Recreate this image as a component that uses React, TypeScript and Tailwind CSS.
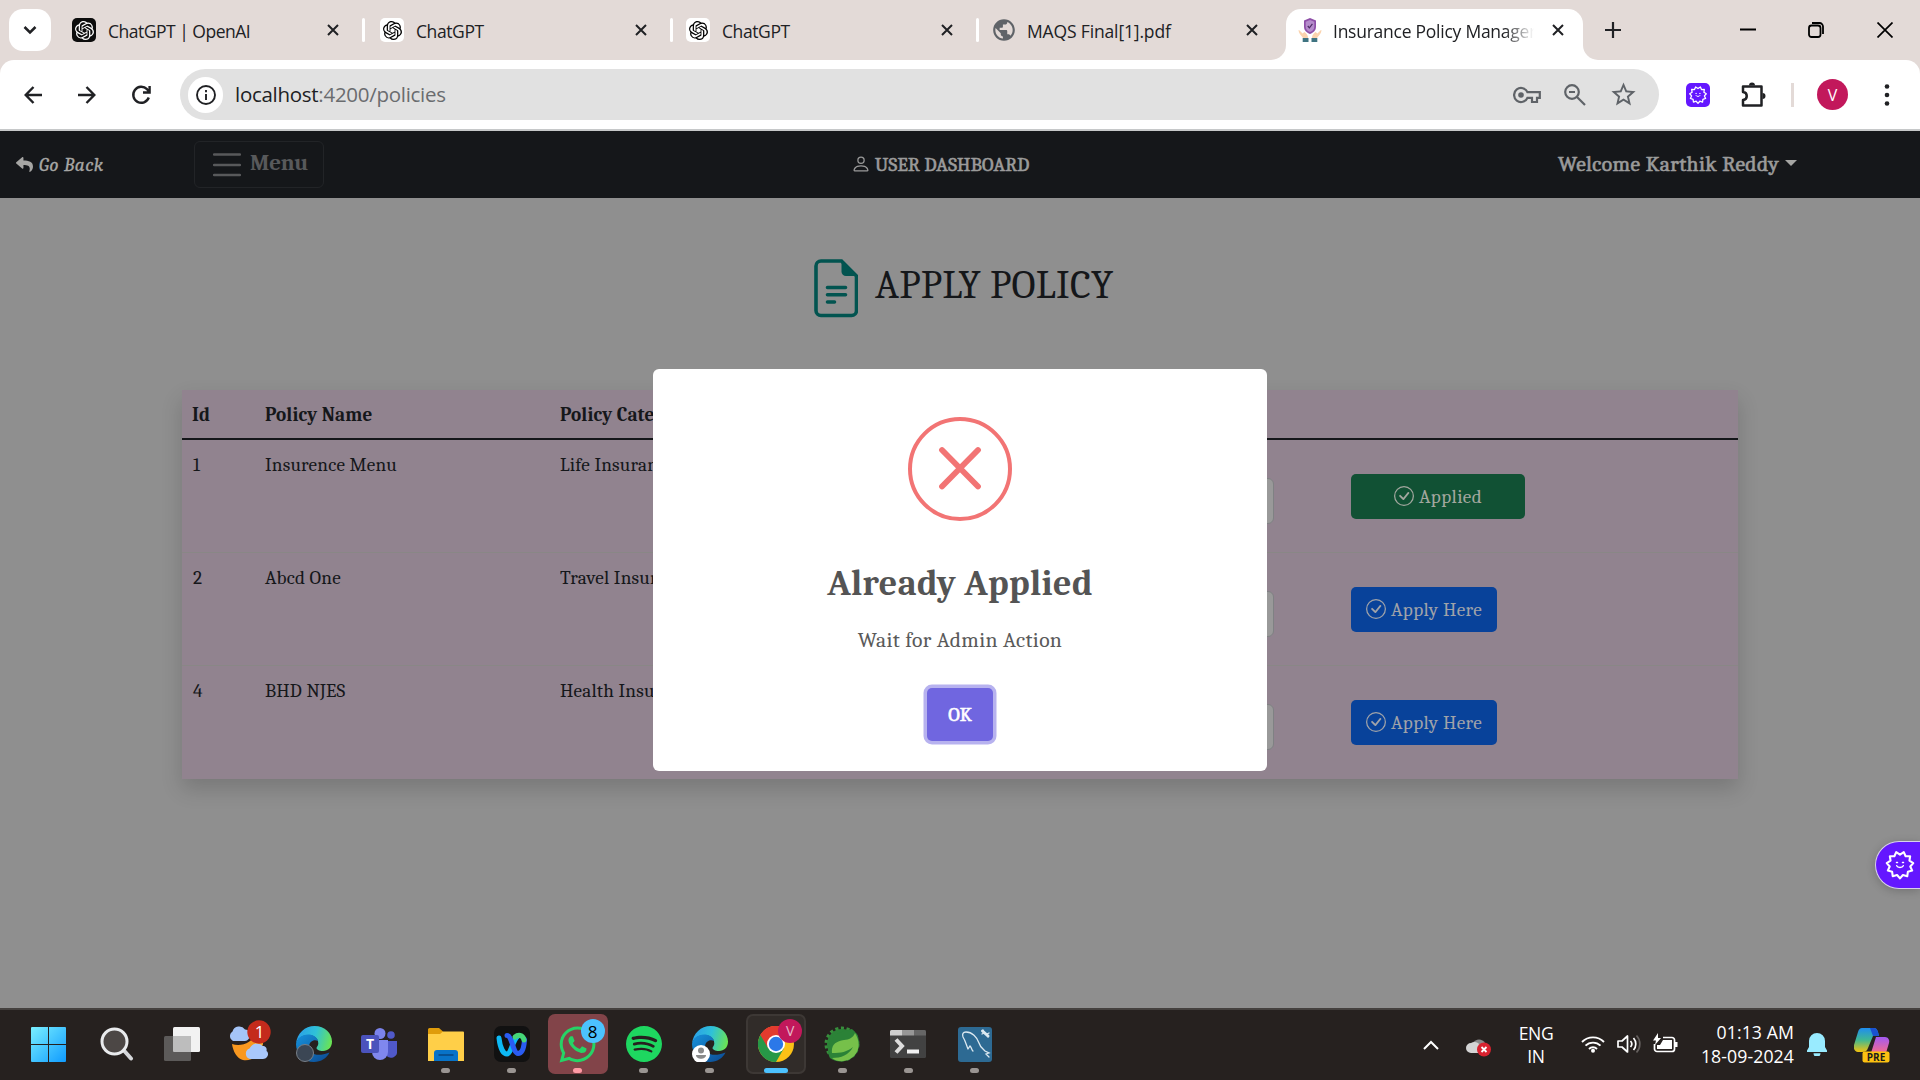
import React from "react";
import { SiOpenai, SiSpotify } from "react-icons/si";
import { FaReply, FaWhatsapp } from "react-icons/fa";
import { BsPerson, BsCheckCircle } from "react-icons/bs";
import { MdPublic, MdStarBorder } from "react-icons/md";

const serif = "font-[Caladea,Cambria,'Liberation_Serif',serif]";
const sans = "font-['Segoe_UI','Open_Sans',sans-serif]";

function CloseX({ className = "" }: { className?: string }) {
  return (
    <svg viewBox="0 0 12 12" className={`h-3 w-3 shrink-0 ${className}`} stroke="#202124" strokeWidth="2" fill="none">
      <path d="M1 1l10 10M11 1L1 11" />
    </svg>
  );
}

function Tab({ icon, title, textClass, iconClass }: { icon: React.ReactNode; title: string; textClass: string; iconClass?: string }) {
  return (
    <div className="flex h-full items-center">
      <div className={`flex h-6 w-6 shrink-0 items-center justify-center rounded-[5px] ${iconClass}`}>{icon}</div>
      <span className={`ml-3 w-[212px] shrink-0 whitespace-nowrap pt-[3px] text-[17.5px] text-[#202124] ${textClass}`}>{title}</span>
      <CloseX className="ml-[7px]" />
      <span className="ml-[23px] h-6 w-[3px] shrink-0 rounded bg-white" />
    </div>
  );
}

function GearFace({ className }: { className: string }) {
  const pts = Array.from({ length: 11 }, (_, i) => {
    const a = (i * 2 * Math.PI) / 11 - Math.PI / 2 + Math.PI / 11;
    const b = a + Math.PI / 11;
    return `${(16 + 13.4 * Math.cos(a)).toFixed(2)},${(16 + 13.4 * Math.sin(a)).toFixed(2)} ${(16 + 10.4 * Math.cos(b)).toFixed(2)},${(16 + 10.4 * Math.sin(b)).toFixed(2)}`;
  }).join(" ");
  return (
    <svg viewBox="0 0 32 32" className={className} fill="none" stroke="white" strokeLinejoin="round" strokeLinecap="round">
      <polygon points={pts} strokeWidth="2.1" />
      <path d="M12.7 16.8c1 2.200 5.600 2.200 6.600 0" strokeWidth="1.500" />
      <path d="M12.500 13.500h1M18.500 13.500h1" strokeWidth="1.500" />
    </svg>
  );
}

function ShieldHands() {
  return (
    <svg viewBox="0 0 24 24" className="h-6 w-6 shrink-0">
      <path d="M12 0l6 2.500v6c0 4-2.500 6-6 7.500-3.500-1.500-6-3.500-6-7.500v-6z" fill="#8e4fa8" />
      <path d="M12 2l4.300 1.700v4.800c0 3-1.700 4.500-4.300 5.600-2.600-1.100-4.300-2.600-4.300-5.600V3.700z" fill="#b58ccb" />
      <path d="M9.800 8l1.600 1.800 3-4" stroke="#4a2a63" strokeWidth="1.200" fill="none" />
      <path d="M.5 12c1 0 2.500 2 4 3.500l2-1.500c2 1.500 3.500 3 3.500 6H5C3 17.500.500 15 .500 12zM23.500 12c-1 0-2.500 2-4 3.500l-2-1.500c-2 1.500-3.500 3-3.500 6h5c2-2.500 4.500-5 4.500-8z" fill="#fbd3ae" />
      <path d="M4.700 20h5.800v4H4.700zM13.500 20h5.800v4h-5.800z" fill="#3f7481" />
    </svg>
  );
}

function TabStrip() {
  return (
    <div className={`flex h-[60px] bg-[#e3dad7] ${sans}`}>
      <div className="ml-[9px] mt-[9px] flex h-[42px] w-[42px] items-center justify-center rounded-[14px] bg-white">
        <svg viewBox="0 0 14 10" className="h-[10px] w-[14px]" fill="none" stroke="#202124" strokeWidth="2.500">
          <path d="M1.500 2l5.500 5.500L12.500 2" />
        </svg>
      </div>
      <div className="ml-[21px] flex h-[60px]">
        <div className="w-[308px]">
          <Tab title="ChatGPT | OpenAI" textClass="tracking-[-0.5px]" iconClass="bg-[#0d0d0d]" icon={<SiOpenai className="h-[19px] w-[19px] text-white" />} />
        </div>
        <div className="w-[306px]">
          <Tab title="ChatGPT" textClass="tracking-[-0.4px]" iconClass="bg-white" icon={<SiOpenai className="h-[19px] w-[19px] text-black" />} />
        </div>
        <div className="w-[306px]">
          <Tab title="ChatGPT" textClass="tracking-[-0.4px]" iconClass="bg-white" icon={<SiOpenai className="h-[19px] w-[19px] text-black" />} />
        </div>
        <div className="flex h-full w-[279px] items-center">
          <MdPublic className="ml-[-1px] h-[26px] w-[26px] shrink-0 text-[#5f6368]" />
          <span className="ml-[10px] w-[220px] whitespace-nowrap pt-[3px] text-[17.5px] tracking-[-0.150px] text-[#202124]">MAQS Final[1].pdf</span>
          <CloseX className="ml-[-1px]" />
        </div>
      </div>
      <div className="mt-[9px] flex h-[51px]">
        <div className="flex h-full w-[15px] items-end bg-white">
          <div className="h-full w-full rounded-br-[15px] bg-[#e3dad7]" />
        </div>
        <div className="flex h-full w-[297px] items-center rounded-t-[15px] bg-white pb-[9px] pl-3">
          <ShieldHands />
          <span className="ml-[11px] w-[201px] overflow-hidden whitespace-nowrap pt-[3px] text-[17.500px] tracking-[-0.250px] text-[#202124] [mask-image:linear-gradient(to_right,black_85%,transparent)]">
            Insurance Policy Manager
          </span>
          <CloseX className="ml-[18px]" />
        </div>
        <div className="h-full w-[15px] bg-white">
          <div className="h-full w-full rounded-bl-[15px] bg-[#e3dad7]" />
        </div>
      </div>
      <div className="ml-[7px] flex h-[60px] items-center text-[#202124]">
        <svg viewBox="0 0 16 16" className="h-4 w-4" stroke="currentColor" strokeWidth="2.200">
          <path d="M8 0v16M0 8h16" />
        </svg>
        <svg viewBox="0 0 16 16" className="ml-[119px] h-4 w-4" stroke="black" strokeWidth="2">
          <path d="M0 7.500h16" />
        </svg>
        <svg viewBox="0 0 16 16" className="ml-[52px] h-4 w-4" stroke="black" strokeWidth="1.800" fill="none">
          <rect x="1" y="3.500" width="11.500" height="11.500" rx="2.500" />
          <path d="M4 1h7.500a3.500 3.500 0 013.500 3.500V12" />
        </svg>
        <svg viewBox="0 0 16 16" className="ml-[53px] h-4 w-4" stroke="black" strokeWidth="1.700">
          <path d="M.5.5l15 15M15.500.500l-15 15" />
        </svg>
      </div>
    </div>
  );
}

function Toolbar() {
  const st = { fill: "none", stroke: "#202124", strokeWidth: 2.4 };
  return (
    <div className="bg-[#e3dad7]">
      <div className={`flex h-[71px] items-center rounded-t-[14px] border-b-2 border-[#c6c8c9] bg-white ${sans}`}>
        <svg viewBox="0 0 18 18" className="ml-[24px] h-[18px] w-[18px]" {...st}>
          <path d="M18 9H2M9.500 1L1.700 9l7.800 8" />
        </svg>
        <svg viewBox="0 0 18 18" className="ml-[36px] h-[18px] w-[18px]" {...st}>
          <path d="M0 9h16M8.500 1l7.800 8-7.800 8" />
        </svg>
        <svg viewBox="0 0 20 20" className="ml-[35px] h-5 w-5" {...st}>
          <path d="M17.800 12.500A8 8 0 1116 4.200L18.500 7M18.600 1v6.500H12" />
        </svg>
        <div className="ml-[29px] flex h-[51px] w-[1479px] items-center rounded-full bg-[#e1e1e1] pl-2">
          <div className="flex h-9 w-[35px] items-center justify-center rounded-full bg-white">
            <svg viewBox="0 0 20 20" className="h-5 w-5" fill="none" stroke="#202124" strokeWidth="1.900">
              <circle cx="10" cy="10" r="9" />
              <path d="M10 9v6M10 5v2.200" />
            </svg>
          </div>
          <span className="ml-[12px] whitespace-nowrap pb-px text-[20.500px] tracking-[-0.280px] text-[#6a6c6f]">
            <span className="text-[#202124]">localhost</span>:4200/policies
          </span>
          <div className="ml-auto flex items-center pr-[21px] text-[#5f6368]">
            <svg viewBox="0 0 28 18" className="h-[18px] w-7" fill="none" stroke="currentColor" strokeWidth="2.200">
              <path d="M14.500 6.200A7 7 0 1014.500 11.800H19V16h5v-4.200h2.800V6.200z" />
              <circle cx="8" cy="9" r="2.800" fill="currentColor" stroke="none" />
            </svg>
            <svg viewBox="0 0 22 22" className="ml-[23px] h-[22px] w-[22px]" fill="none" stroke="currentColor" strokeWidth="2.200">
              <circle cx="8" cy="8" r="6.800" />
              <path d="M13 13l8 8M5 8h6" />
            </svg>
            <MdStarBorder className="ml-[23px] h-[29px] w-[29px]" />
          </div>
        </div>
        <div className="ml-[27px] flex h-6 w-6 items-center justify-center rounded-[5px] bg-[#6417ff]">
          <GearFace className="h-5 w-5" />
        </div>
        <svg viewBox="0 0 26 26" className="ml-[31px] h-[26px] w-[26px]" fill="none" stroke="#202124" strokeWidth="2.500">
          <path d="M2 4.500h18.500v19H2V18c5-.500 5-7.500 0-8z" strokeLinejoin="round" />
          <path d="M8 3.500a3 3 0 016 0zM21.500 11a3 3 0 010 6z" fill="#202124" stroke="none" />
        </svg>
        <div className="ml-[24px] h-6 w-[3px] bg-[#e3dad7]" />
        <div className="ml-[23px] flex h-[31px] w-[31px] items-center justify-center rounded-full bg-[#c2185b] text-[16px] text-white">V</div>
        <svg viewBox="0 0 6 22" className="ml-[36px] h-[22px] w-[6px]" fill="#202124">
          <circle cx="3" cy="2.500" r="2.300" />
          <circle cx="3" cy="11" r="2.300" />
          <circle cx="3" cy="19.500" r="2.300" />
        </svg>
      </div>
    </div>
  );
}

function Navbar() {
  return (
    <div className={`flex h-[67px] items-center bg-[#15171a] text-[#9b9b9b] ${serif}`}>
      <div className="ml-4 flex w-[178px] items-center text-[#a6a6a4]">
        <FaReply className="h-[17px] w-[17px]" />
        <span className="ml-[6px] whitespace-nowrap pt-px text-[19.200px] italic tracking-[0.550px] [-webkit-text-stroke:0.300px]">Go Back</span>
      </div>
      <div className="flex h-[47px] w-[130px] items-center rounded-md border border-[#222427] pl-[18px] text-[#58595b]">
        <svg viewBox="0 0 28 24" className="h-6 w-7" stroke="currentColor" strokeWidth="2.400" strokeLinecap="round">
          <path d="M1 1.500h26M1 12h26M1 22h26" />
        </svg>
        <span className="ml-[9px] pb-[3px] text-[23px] font-bold tracking-[-0.250px]">Menu</span>
      </div>
      <div className="ml-[527px] flex items-center">
        <BsPerson className="h-[20px] w-[20px]" />
        <span className="ml-[4px] whitespace-nowrap pt-px text-[19.200px] tracking-[0.280px] [-webkit-text-stroke:0.600px]">USER DASHBOARD</span>
      </div>
      <div className="ml-auto flex items-center pr-[123px]">
        <span className="whitespace-nowrap text-[21.600px] tracking-[0.400px] [-webkit-text-stroke:0.600px]">Welcome Karthik Reddy</span>
        <span className="ml-[6px] mt-[-2px] h-0 w-0 border-x-[6px] border-t-[6px] border-x-transparent border-t-[#a6a6a4]" />
      </div>
    </div>
  );
}

const policies = [
  { id: "1", name: "Insurence Menu", category: "Life Insurance", applied: true },
  { id: "2", name: "Abcd One", category: "Travel Insurance", applied: false },
  { id: "4", name: "BHD NJES", category: "Health Insurance", applied: false },
];

const cols = "grid grid-cols-[73px_295px_343px_448px_1fr] pl-[10px]";

function PolicyTable() {
  return (
    <div className="mt-[73px] ml-[182px] h-[389px] w-[1556px] bg-[#91838f] text-[19.200px] text-[#15171a] shadow-[0_10px_20px_rgba(0,0,0,0.160)]">
      <div className={`${cols} h-[50px] border-b-2 border-[#15171a] pt-[11px] font-bold leading-[29px] tracking-[0.130px]`}>
        <span>Id</span>
        <span>Policy Name</span>
        <span>Policy Category</span>
      </div>
      {policies.map((p, i) => (
        <div key={p.id} className={`${cols} h-[113px] pt-[11px] leading-[29px] tracking-[0.200px] ${i < 2 ? "border-b border-[#898786]" : ""}`}>
          <span className="pl-px">{p.id}</span>
          <span>{p.name}</span>
          <span className="overflow-hidden whitespace-nowrap">{p.category}</span>
          <div className="mt-[27px] ml-[50px] h-[46px] w-[321px] rounded-[6px] border border-[#7f8183] bg-[#999]" />
          <div className={`mt-[23px] flex h-[45px] items-center justify-center whitespace-nowrap rounded-[5px] ${p.applied ? "w-[174px] bg-[#115134] text-[#a3a79f]" : "w-[146px] bg-[#08429a] text-[#a0a3a9]"}`}>
            <BsCheckCircle className="mb-[2px] h-5 w-5" />
            <span className="ml-[5px] pt-px tracking-[0.370px]">{p.applied ? "Applied" : "Apply Here"}</span>
          </div>
        </div>
      ))}
    </div>
  );
}

function Dialog() {
  return (
    <div className="absolute top-[369px] left-[653px] flex h-[402px] w-[614px] flex-col items-center rounded-[6px] bg-white">
      <svg viewBox="0 0 104 104" className="mt-[48px] h-[104px] w-[104px]" fill="none" stroke="#f27474">
        <circle cx="52" cy="52" r="50" strokeWidth="4" />
        <path d="M34 33l36 36.500M70 33L34 69.500" strokeWidth="5.800" strokeLinecap="round" />
      </svg>
      <h2 className="mt-[39px] whitespace-nowrap text-[36px] font-bold leading-[48px] tracking-[0.380px] text-[#545454]">Already Applied</h2>
      <p className="mt-[16px] whitespace-nowrap text-[21.600px] leading-[32px] tracking-[0.330px] text-[#5a5a5a]">Wait for Admin Action</p>
      <div className="mt-[32px] flex h-[53px] w-[66px] items-center justify-center rounded-[5px] bg-[#7066e0] pt-px text-[19.200px] text-white ring-[3.500px] ring-[#b7b2ef] [-webkit-text-stroke:0.600px]">OK</div>
    </div>
  );
}

function Page() {
  return (
    <main className={`h-[810px] bg-[#8f8f8f] ${serif}`}>
      <div className="flex pt-[60px] pl-[814px]">
        <svg viewBox="0 0 44 59" className="mt-px mb-[-1px] h-[59px] w-11" fill="none" stroke="#025450">
          <path d="M27.500 2H7a5 5 0 00-5 5v44.500a5 5 0 005 5h30.500a5 5 0 005-5V17z" strokeWidth="3.600" />
          <path d="M27.500 1L43.500 17H32a4.500 4.500 0 01-4.500-4.500z" fill="#025450" stroke="none" />
          <path d="M13.500 28.500h18M13.500 35.800h18M13.500 43h7" strokeWidth="3.600" strokeLinecap="round" />
        </svg>
        <h1 className="ml-[17px] whitespace-nowrap text-[40px] leading-[54px] tracking-[0.230px] text-[#15171a]">APPLY POLICY</h1>
      </div>
      <PolicyTable />
    </main>
  );
}

function Edge({ badge }: { badge: React.ReactNode }) {
  return (
    <svg viewBox="0 0 36 36" className="ml-px h-9 w-9">
      <defs>
        <linearGradient id="edgeTop" x1="0" y1="0.400" x2="1" y2="0.600">
          <stop offset="0" stopColor="#2a9fe8" />
          <stop offset="0.500" stopColor="#2fc1d8" />
          <stop offset="1" stopColor="#6be452" />
        </linearGradient>
        <linearGradient id="edgeLow" x1="0" y1="0" x2="1" y2="1">
          <stop offset="0" stopColor="#1692dc" />
          <stop offset="1" stopColor="#0c4890" />
        </linearGradient>
      </defs>
      <path d="M0 18C1 7 9 0 18.500 0 29 0 36 7.500 36 15.500c0 6-4 9.500-9 9.500-4 0-6.500-1.500-6.500-3 0-1 1.800-2 1.800-4.500C22.300 12 17.500 9 12 9 6 9 1.500 12.500 0 18z" fill="url(#edgeTop)" />
      <path d="M0 18C1 12 6 8.500 12 8.500c5 0 9 2.500 10 6.500-3-2-9-.5-9 6 0 7 8 10.500 20.500 5.500C31 32 25 36 18 36 8 36 0 28 0 18z" fill="url(#edgeLow)" />
      {badge}
    </svg>
  );
}

function Slot({ children, mark = "none" }: { children: React.ReactNode; mark?: "none" | "dot" | "pink" | "active" }) {
  const marks = {
    none: "bottom-px w-2 bg-transparent",
    dot: "bottom-px w-[9px] bg-[#9a9592]",
    pink: "bottom-px w-[9px] bg-[#ff9aa5]",
    active: "bottom-[-1px] w-6 bg-[#4cc2ff]",
  };
  const tiles = {
    none: "",
    dot: "",
    pink: "bg-[#824449]",
    active: "border-2 border-[#3d3835] bg-[#312c29]",
  };
  return (
    <div className="flex w-[66.150px] shrink-0 justify-center">
      <div className={`relative mt-1 flex h-[60px] w-[60px] items-center justify-center rounded-[7px] ${tiles[mark]}`}>
        {children}
        <span className={`absolute h-[5px] rounded-full ${marks[mark]}`} />
      </div>
    </div>
  );
}

function Taskbar() {
  return (
    <div className={`flex h-[72px] border-t-2 border-[#45413f] bg-[#26211f] text-white ${sans}`}>
      <div className="flex w-[1008px] pl-[15.500px]">
        <Slot>
          <svg viewBox="0 0 35 35" className="h-[35px] w-[35px]">
            <defs>
              <linearGradient id="win" x1="0" y1="0" x2="1" y2="1" gradientUnits="objectBoundingBox">
                <stop offset="0" stopColor="#7af0ff" />
                <stop offset="1" stopColor="#0f9bff" />
              </linearGradient>
            </defs>
            <path d="M1 0h16v17H0V1a1 1 0 011-1zM18 0h16a1 1 0 011 1v16H18zM0 18h17v17H1a1 1 0 01-1-1zM18 18h17v16a1 1 0 01-1 1H18z" fill="url(#win)" />
          </svg>
        </Slot>
        <Slot>
          <svg viewBox="0 0 34 34" className="ml-[5px] h-[34px] w-[34px]" fill="none">
            <path d="M23.500 23l7.500 8.500" stroke="#d5d7da" strokeWidth="4" strokeLinecap="round" />
            <circle cx="14.500" cy="14.500" r="12.500" fill="#4c4745" stroke="#e9ebed" strokeWidth="3" />
          </svg>
        </Slot>
        <Slot>
          <svg viewBox="0 0 36 34" className="ml-[3px] h-[34px] w-9">
            <rect x="9" y="0" width="27" height="25" rx="1.500" fill="#f2f2f2" />
            <rect x="0" y="9" width="27" height="25" rx="1.500" fill="#5c5a59" />
            <path d="M9 9h18v16H10a1 1 0 01-1-1z" fill="#bdbdbd" />
          </svg>
        </Slot>
        <Slot>
          <svg viewBox="0 0 42 44" className="mt-[-5px] ml-[6px] h-[44px] w-[42px]">
            <path d="M3 24c9 3 21-1 24-12l7 2c2 16-8 28-20 26C8 39 4 31 3 24z" fill="#f89820" />
            <path d="M27 12l7 2c1 5 0 11-2 15l-9-8c2-2 3-5 4-9z" fill="#fbb73a" />
            <path d="M5 14a5.500 5.500 0 01-.5-9.500 7 7 0 0112.500-2c4 0 5 3 5 5.500S20 14 17 14z" fill="#a5c5f8" transform="translate(-1 7)" />
            <path d="M21 39a5.500 5.500 0 01-.500-10.500 8 8 0 0113-2.500c4 0 4.500 3 4 5 3 2 1.500 8-3.500 8z" fill="#a9c8fb" />
            <circle cx="30" cy="12" r="11.700" fill="#c42b1c" />
            <text x="30.500" y="18" fontSize="17" textAnchor="middle" fill="white">1</text>
          </svg>
        </Slot>
        <Slot>
          <Edge badge={<circle cx="9" cy="27" r="8.500" fill="#3b4654" stroke="#777f88" strokeWidth="1" />} />
        </Slot>
        <Slot>
          <svg viewBox="0 0 36 33" className="h-[33px] w-9">
            <circle cx="30" cy="7" r="3.800" fill="#5059c9" />
            <path d="M24 13h12v10a6 6 0 01-11 4z" fill="#5059c9" />
            <circle cx="19" cy="5.500" r="5.500" fill="#7b83eb" />
            <path d="M11 12h16v12a8 8 0 01-16 0z" fill="#8087ee" />
            <rect x="0" y="7" width="18" height="18" rx="2" fill="#4b53bc" />
            <text x="9" y="21" fontSize="14" fontWeight="700" textAnchor="middle" fill="white">T</text>
          </svg>
        </Slot>
        <Slot mark="dot">
          <svg viewBox="0 0 36 33" className="ml-px h-[33px] w-9">
            <path d="M0 9V1.500A1.500 1.500 0 011.500 0H11l4 3.500V9z" fill="#df9c0b" />
            <path d="M0 6h12l3-2.500h20a1 1 0 011 1V33H0z" fill="#ffcf48" />
            <path d="M6 33v-8a3 3 0 013-3h18a3 3 0 013 3v8z" fill="#0873c8" />
            <path d="M10.500 27h15" stroke="#084a86" strokeWidth="1.600" />
          </svg>
        </Slot>
        <Slot mark="dot">
          <svg viewBox="0 0 36 36" className="ml-px h-9 w-9" fill="none" strokeLinecap="round">
            <rect width="36" height="36" rx="7" fill="#111" />
            <path d="M5 12c1 9 4 16 8 16s6-15 11-18" stroke="#0db9f5" strokeWidth="5" />
            <path d="M13 9.500c5 0 6 18 11 18 4 0 6-5 6.500-14" stroke="#2a5cf2" strokeWidth="5" />
            <path d="M21 11c3-2.500 8-2.500 9 3" stroke="#45d678" strokeWidth="5" />
          </svg>
        </Slot>
        <Slot mark="pink">
          <FaWhatsapp className="h-[41px] w-[41px] text-[#26d366]" />
          <span className="absolute top-[5px] left-[33px] flex h-6 w-6 items-center justify-center rounded-full bg-[#4cc2ff] text-[17px] leading-none text-black">8</span>
        </Slot>
        <Slot mark="dot">
          <SiSpotify className="ml-px h-9 w-9 text-[#1ed760]" />
        </Slot>
        <Slot mark="dot">
          <Edge
            badge={
              <g>
                <circle cx="9" cy="28" r="9" fill="#fff" />
                <circle cx="9" cy="24.500" r="3" fill="#8a8a8a" />
                <path d="M4 29h10c0 5-10 5-10 0z" fill="#8a8a8a" />
              </g>
            }
          />
        </Slot>
        <Slot mark="active">
          <svg viewBox="0 0 36 36" className="h-9 w-9">
            <circle cx="18" cy="18" r="18" fill="#fbc116" />
            <path d="M18 18L2.400 9A18 18 0 0133.600 9z" fill="#e33b2e" />
            <path d="M18 18L2.400 9A18 18 0 0018 36l7.800-13.500z" fill="#279847" />
            <path d="M18 9h15.600a18 18 0 00-31.200 0L10 22z" fill="#e33b2e" />
            <circle cx="18" cy="18" r="9" fill="#fff" />
            <circle cx="18" cy="18" r="7.200" fill="#2b78e8" />
          </svg>
          <span className="absolute top-[3px] left-[30px] flex h-6 w-6 items-center justify-center rounded-full bg-[#c2185b] text-[14px] leading-none text-[#e6b8c9]">V</span>
        </Slot>
        <Slot mark="dot">
          <svg viewBox="0 0 36 36" className="h-9 w-9">
            <circle cx="18" cy="18" r="15.500" fill="none" stroke="#388e3c" strokeWidth="4" strokeDasharray="3 2.500" />
            <circle cx="18" cy="18" r="15" fill="#2b8237" />
            <path d="M6 32c-2-3-3-9 0-15C9 9 17 5 28 3l5 5c3 6 3 16-2 21-7 8-19 8-25 3z" fill="#2b8237" />
            <path d="M31 7c5 8 5 17-1 23-6 6-16 7-22 2 9 0 17-3 21-11-6 5-12 6-21 6-1-8 4-12 12-13 5-.5 9-2 11-7z" fill="#76c04a" />
          </svg>
        </Slot>
        <Slot mark="dot">
          <svg viewBox="0 0 36 28" className="h-7 w-9" fill="none">
            <rect width="36" height="28" rx="1.500" fill="#424242" />
            <path d="M0 5.500V1.500A1.500 1.500 0 011.500 0H12v5.500z" fill="#cfcfcf" />
            <path d="M12 0h12v5.500H12z" fill="#979797" />
            <path d="M24 0h10.500A1.500 1.500 0 0136 1.500v4H24z" fill="#666" />
            <path d="M6 9.500l6 6.500-6 6.500" stroke="#dedede" strokeWidth="4" />
            <path d="M17 21.500h12" stroke="#f1f1f1" strokeWidth="4" />
          </svg>
        </Slot>
        <Slot mark="dot">
          <svg viewBox="0 0 34 35" className="h-[35px] w-[34px]" fill="none" stroke="#dce9f1" strokeWidth="1.300" strokeLinecap="round">
            <rect width="34" height="35" rx="3" fill="#2d6a93" stroke="none" />
            <path d="M10 22c-2-5-3-9-5-12-1-3 0-5 3-5 6 0 11 5 13 11 1 4 4 6 6 8l4 2-3 1 3 3M10 22l2-3c2 2 2 5 3 5" />
            <path d="M24.500 4l5.500 5" strokeWidth="3" />
            <path d="M25 3l1 3-2 1M30 10l-1-3 2-1" />
          </svg>
        </Slot>
      </div>
      <div className="flex items-center pl-[415px]">
        <svg viewBox="0 0 16 10" className="h-[10px] w-4" fill="none" stroke="white" strokeWidth="2">
          <path d="M1 9l7-7 7 7" />
        </svg>
        <svg viewBox="0 0 26 22" className="ml-[27px] mt-[2px] h-[22px] w-[26px]">
          <path d="M7 8a7 7 0 0112 0l-3 5H4z" fill="#8b8b8b" />
          <path d="M5 18a5 5 0 010-10c3-2 7-1 9 2l6 8z" fill="#d4d4d4" />
          <circle cx="18" cy="14.500" r="7" fill="#d8222f" />
          <path d="M15.500 12l5 5M20.500 12l-5 5" stroke="white" strokeWidth="1.800" />
        </svg>
        <div className="ml-[20px] flex w-[48px] flex-col text-center text-[17.500px] leading-[23px] tracking-[-0.300px]">
          <span>ENG</span>
          <span>IN</span>
        </div>
        <svg viewBox="0 0 24 18" className="ml-[21px] mt-[-2px] h-[18px] w-6" fill="none" stroke="white" strokeWidth="1.900">
          <path d="M1 7a15.500 15.500 0 0122 0M4.500 10.700a10.600 10.600 0 0115 0M8 14a5.600 5.600 0 018 0" />
          <circle cx="12" cy="15.700" r="2" fill="white" stroke="none" />
        </svg>
        <svg viewBox="0 0 24 20" className="ml-3 mt-[-2px] h-5 w-6" fill="none" stroke="white" strokeWidth="1.700">
          <path d="M1 7h4l5.500-5v16L5 13H1zM13.500 7a4.500 4.500 0 010 6M16.500 4a9 9 0 010 12" strokeLinejoin="round" />
          <path d="M19.500 1.500a12.500 12.500 0 010 17" stroke="#65605e" />
        </svg>
        <svg viewBox="0 0 25 20" className="ml-3 mt-[-4px] h-5 w-[25px]" fill="none" stroke="white" strokeWidth="1.700">
          <path d="M10 4.500h9a2.500 2.500 0 012.500 2.500v9a2.500 2.500 0 01-2.500 2.500H4A2.500 2.500 0 011.500 16v-5" />
          <path d="M10 7h9v9H4v-4h3z" fill="white" stroke="none" />
          <path d="M22 9h2.500v5H22zM5 0L0 7.500h3L2 12l6-7H5z" fill="white" stroke="none" />
        </svg>
        <div className="ml-[20px] mt-[-3px] flex w-[96px] flex-col whitespace-nowrap text-right text-[17.700px] leading-[24px] tracking-[0.080px]">
          <span>01:13 AM</span>
          <span>18-09-2024</span>
        </div>
        <svg viewBox="0 0 20 23" className="ml-[13px] mt-[-1px] h-[23px] w-5" fill="#99ebff">
          <path d="M10 0a8 8 0 018 8v6l2 3.500V19H0v-1.500L2 14V8a8 8 0 018-8zM6.500 20.300h7a3.500 3.500 0 01-7 0z" />
        </svg>
        <svg viewBox="0 0 36 35" className="ml-[27px] h-[35px] w-9">
          <defs>
            <linearGradient id="copA" x1="0" y1="0" x2="0" y2="1">
              <stop offset="0" stopColor="#1f8df0" />
              <stop offset="0.500" stopColor="#3fb892" />
              <stop offset="1" stopColor="#f4c20d" />
            </linearGradient>
            <linearGradient id="copB" x1="0" y1="0" x2="0" y2="1">
              <stop offset="0" stopColor="#a259f2" />
              <stop offset="1" stopColor="#f56c8a" />
            </linearGradient>
          </defs>
          <path d="M8 0h12c3 0 4 3 5 8h-6L14 20c-1 3-3 4-6 4H4c-3 0-5-3-4-7L4 4c1-3 2-4 4-4z" fill="url(#copA)" />
          <path d="M16 0h4c3 0 4 3 5 8h-6z" fill="#1a52d0" />
          <path d="M22 9h9c3 0 5 3 4 6l-3 10H17z" fill="url(#copB)" />
          <rect x="8.500" y="23.500" width="27" height="11" rx="2" fill="#fcc111" />
          <text x="22" y="32.800" fontSize="10" fontWeight="700" textAnchor="middle" fill="#1b1b1b">PRE</text>
        </svg>
      </div>
    </div>
  );
}

export default function App() {
  return (
    <div className={`relative h-[1080px] w-[1920px] overflow-hidden ${serif}`}>
      <TabStrip />
      <Toolbar />
      <Navbar />
      <Page />
      <Dialog />
      <div className="absolute top-[841px] right-0 flex h-12 w-[45px] items-center rounded-l-full border border-r-0 border-[#d8d0ee] bg-[#6417ff] pl-[8px] shadow-[0_2px_10px_rgba(0,0,0,0.200)]">
        <GearFace className="h-8 w-8 shrink-0" />
      </div>
      <Taskbar />
    </div>
  );
}
